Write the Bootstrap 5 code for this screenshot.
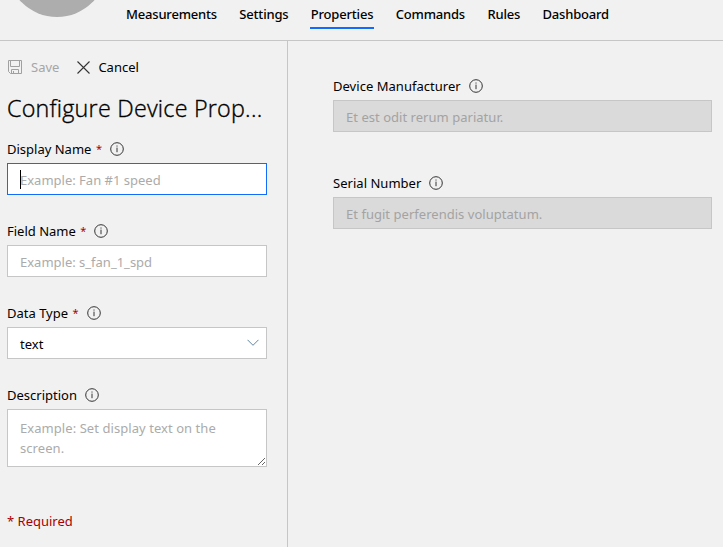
<!DOCTYPE html>
<html lang="en">
<head>
<meta charset="utf-8">
<meta name="viewport" content="width=device-width, initial-scale=1">
<title>Device Properties</title>
<link href="https://cdn.jsdelivr.net/npm/bootstrap@5.3.0/dist/css/bootstrap.min.css" rel="stylesheet">
<style>
body{font-family:"Noto Sans","Open Sans",sans-serif;font-size:13px;line-height:20px;background:#f1f1f1;color:#000;height:547px;overflow:hidden}
.top-bar{height:41px;border-bottom:1px solid #c6c6c6}
.avatar-slot{width:125px}
.avatar{width:100px;height:100px;left:7px;top:-83px;background:#adadad}
.tabs{gap:20.4px;padding-top:4px}
.tabs .nav-link{padding:0 1px 3px;color:#000;font-weight:500;letter-spacing:-.19px;border-bottom:2px solid transparent}
.tabs .nav-link.active{border-bottom-color:#136bfb}
.layout{height:506px}
.side{width:288px;border-right:1px solid #c6c6c6;padding:16px 20px 0 7px}
.tool{color:#000;gap:8px}
.tool.off{color:#a6a6a6}
.panel-title{font-family:"Open Sans","Noto Sans",sans-serif;font-size:23.3px;line-height:32px;font-weight:300;letter-spacing:.23px;-webkit-text-stroke:.35px #000;margin:15px 0}
.field{margin-bottom:26px}
.cap{height:20px;margin-bottom:4px}
.cap b{font-weight:400;font-size:11px;color:#a80000;margin-left:4.5px}
.cap svg{margin-left:8px;margin-top:-1px}
.box.form-control,.box.form-select{height:32px;border:1px solid #c6c6c6;border-radius:0;font-size:13px;line-height:20px;padding:6px 12px 4px;color:#000;background-color:#fff;box-shadow:none}
.box.form-select{background-image:none}
.box::placeholder{color:#ababab!important;opacity:1}
.box.form-control.on{border-color:#136bfb}
textarea.box.form-control{height:58px;min-height:58px;padding:8px 12px;overflow:hidden;display:block;letter-spacing:.06px}
.box.form-control:disabled{background:#dadada}
.box:disabled::placeholder{color:#a3a3a3!important}
.caret{left:13px;top:7px;width:1px;height:19px;background:#000}
.chev{right:8px;top:12px}
.need{color:#a80000;margin-top:44px}
.main{padding:35px 11px 0 45px}
.main .field{margin-bottom:41px}
.main .cap,.main .box{letter-spacing:.03px}
</style>
</head>
<body>
<svg class="d-none"><symbol id="info" viewBox="0 0 14 14"><circle cx="7" cy="7" r="6.3" fill="none" stroke="#333" stroke-width="1"/><path d="M7 5.6v4.6M7 3.5v1.1" stroke="#333" stroke-width="1" fill="none"/></symbol></svg>
<header class="top-bar d-flex position-relative">
  <div class="avatar-slot flex-shrink-0"><div class="avatar rounded-circle position-absolute"></div></div>
  <nav class="nav tabs flex-nowrap align-items-start">
    <a class="nav-link" href="#">Measurements</a>
    <a class="nav-link" href="#">Settings</a>
    <a class="nav-link active" href="#">Properties</a>
    <a class="nav-link" href="#">Commands</a>
    <a class="nav-link" href="#">Rules</a>
    <a class="nav-link" href="#">Dashboard</a>
  </nav>
</header>
<div class="layout d-flex">
  <aside class="side flex-shrink-0">
    <div class="d-flex">
      <div class="tool off d-flex align-items-center me-3">
        <svg width="16" height="16" viewBox="0 0 16 16" fill="none" stroke="#a0a0a0"><path d="M1.5 1.5h13v13h-11l-2-2zM3.5 1.5v6h9v-6M4.5 14.5v-4h7v4M6.5 12v2.5"/></svg><span>Save</span>
      </div>
      <div class="tool d-flex align-items-center">
        <svg width="15" height="14" viewBox="0 0 15 14" fill="none" stroke="#333" stroke-width="1.1"><path d="M2.5 1.5l12 12M14.5 1.5l-12 12"/></svg><span>Cancel</span>
      </div>
    </div>
    <h1 class="panel-title text-nowrap">Configure Device Prop...</h1>
    <div class="field">
      <div class="cap d-flex align-items-center">Display Name<b>*</b><svg width="14" height="14"><use href="#info"/></svg></div>
      <div class="position-relative"><input class="form-control box on" placeholder="Example: Fan #1 speed"><i class="caret position-absolute"></i></div>
    </div>
    <div class="field">
      <div class="cap d-flex align-items-center">Field Name<b>*</b><svg width="14" height="14"><use href="#info"/></svg></div>
      <input class="form-control box" placeholder="Example: s_fan_1_spd">
    </div>
    <div class="field">
      <div class="cap d-flex align-items-center">Data Type<b>*</b><svg width="14" height="14"><use href="#info"/></svg></div>
      <div class="position-relative"><select class="form-select box"><option>text</option></select>
        <svg class="chev position-absolute" width="12" height="8" viewBox="0 0 12 8" fill="none" stroke="#5f86a0"><path d="M.5 .8L6 6.3 11.5 .8"/></svg></div>
    </div>
    <div>
      <div class="cap d-flex align-items-center">Description<svg width="14" height="14"><use href="#info"/></svg></div>
      <textarea class="form-control box" rows="2" placeholder="Example: Set display text on the screen."></textarea>
    </div>
    <div class="need">* Required</div>
  </aside>
  <main class="main flex-grow-1">
    <div class="field">
      <div class="cap d-flex align-items-center">Device Manufacturer<svg width="14" height="14"><use href="#info"/></svg></div>
      <input class="form-control box" disabled placeholder="Et est odit rerum pariatur.">
    </div>
    <div class="field">
      <div class="cap d-flex align-items-center">Serial Number<svg width="14" height="14"><use href="#info"/></svg></div>
      <input class="form-control box" disabled placeholder="Et fugit perferendis voluptatum.">
    </div>
  </main>
</div>
<script src="https://cdn.jsdelivr.net/npm/bootstrap@5.3.0/dist/js/bootstrap.bundle.min.js"></script>
</body>
</html>
